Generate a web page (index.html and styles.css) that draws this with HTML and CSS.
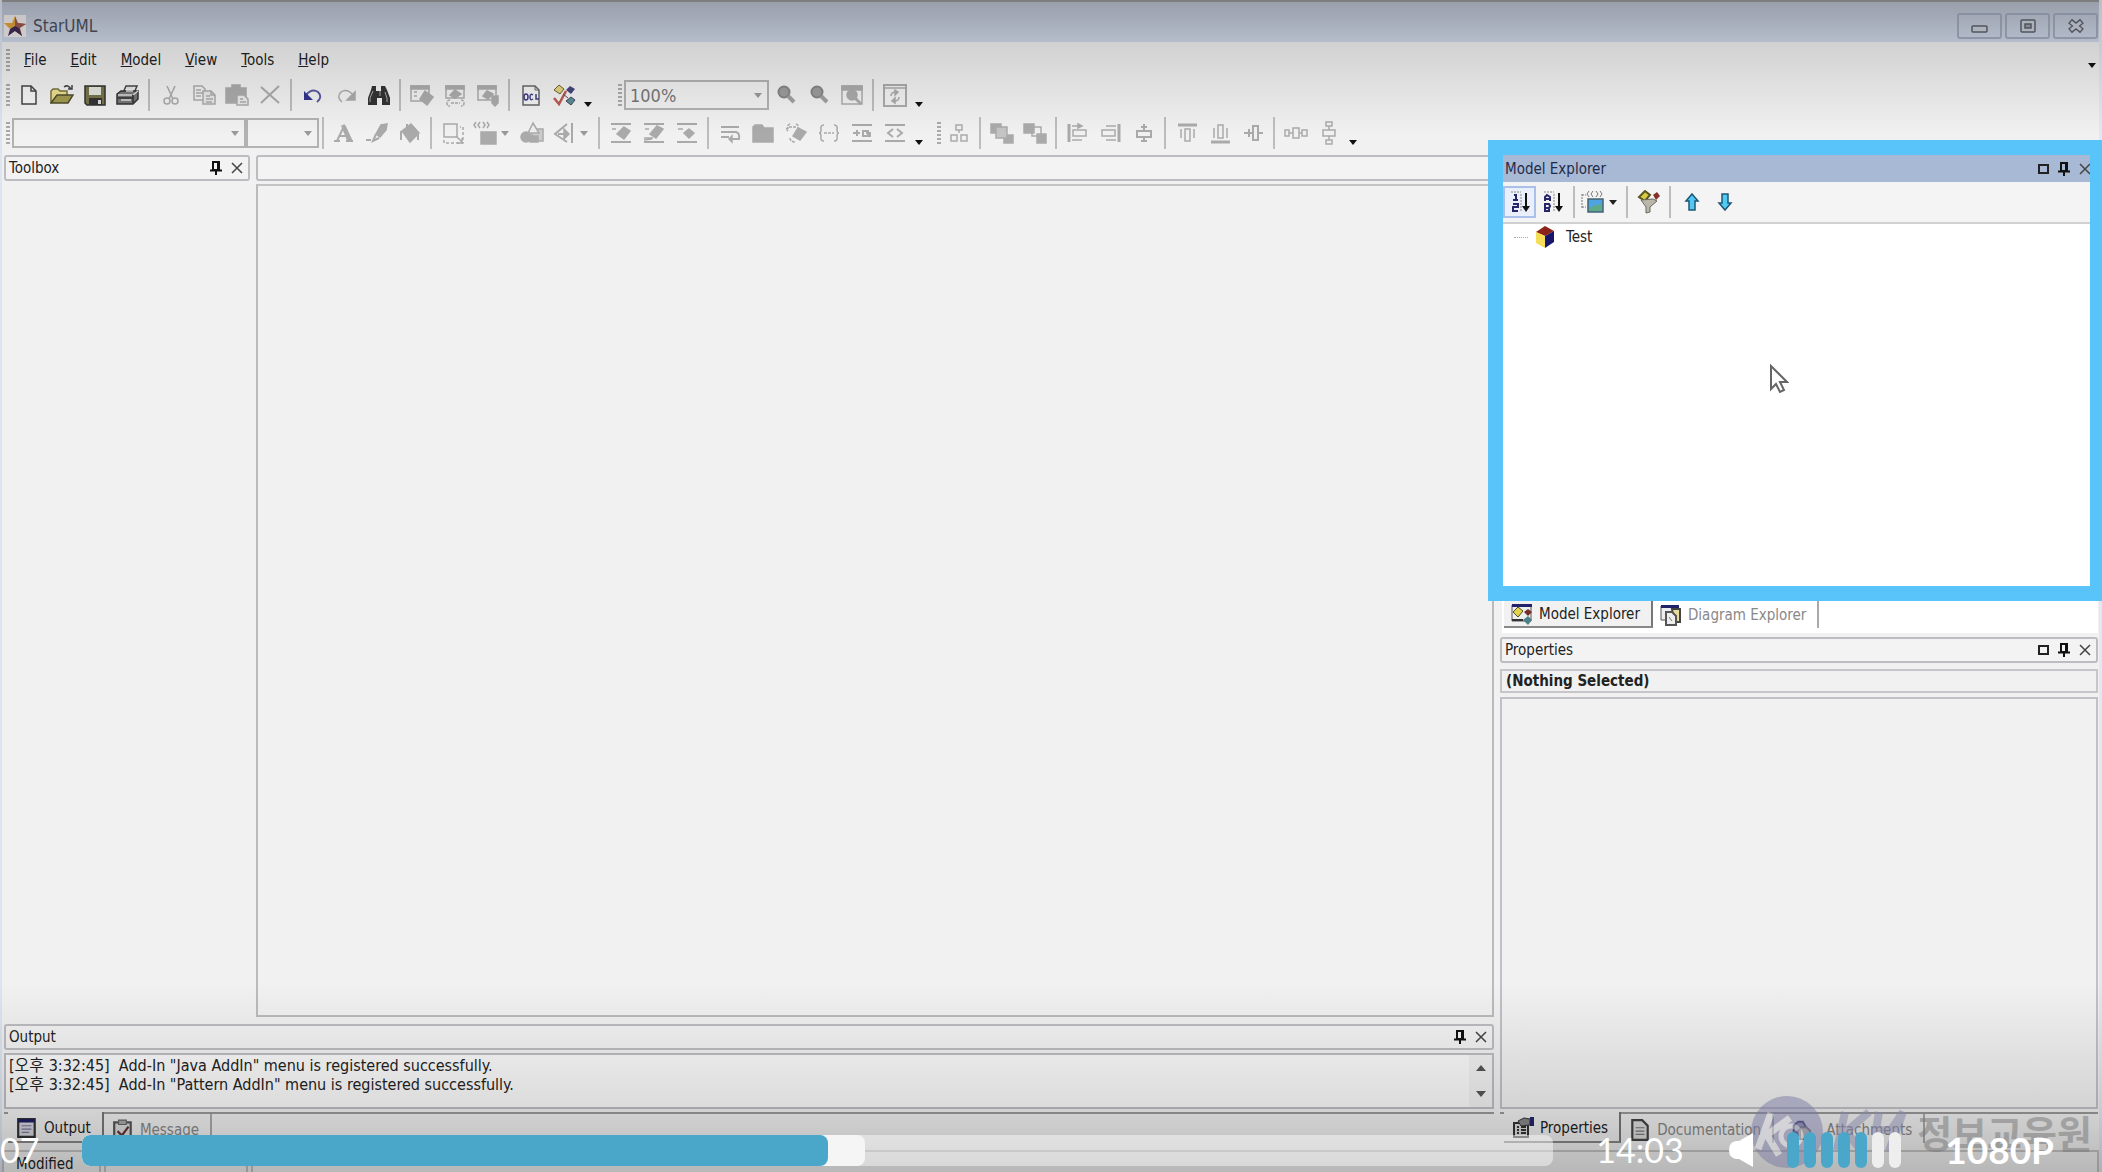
FILE: index.html
```
<!DOCTYPE html>
<html lang="en">
<head>
    <meta charset="UTF-8">
    <meta name="viewport" content="width=device-width, initial-scale=1.0">
    <title>StarUML</title>
    <link rel="stylesheet" href="styles.css">
</head>
<body>
    <!-- shared icons -->
    <svg class="sprite" aria-hidden="true">
        <symbol id="i-pin" viewBox="0 0 14 16"><path d="M4 2h6v8H4zM1 10.500h12M7 10v5" fill="none" stroke="#111" stroke-width="2"/><path d="M8 2h2v8H8z" fill="#111"/></symbol>
        <symbol id="i-close" viewBox="0 0 14 16"><path d="M2 3l10 10M12 3L2 13" fill="none" stroke="#444" stroke-width="1.500"/></symbol>
        <symbol id="i-max" viewBox="0 0 14 16"><path d="M3 4h9v8H3z" fill="none" stroke="#222" stroke-width="2"/></symbol>
        <symbol id="i-zoom" viewBox="0 0 24 24"><circle cx="10" cy="9" r="5.500" fill="#9c9c9c" stroke="#858585" stroke-width="2"/><path d="M14 13l6 6" stroke="#a0a0a0" stroke-width="4"/></symbol>
    </svg>

    <div class="app">
        <header class="titlebar">
            <svg class="logo" viewBox="0 0 22 24"><path d="M0 1h22v22H0z" fill="#f0eceb"/><path d="M11 2l3 7 8 1-6 4 2 8-7-5z" fill="#9c5b4a"/><path d="M11 2l-3 7-8 0 6 6 5-2z" fill="#e3a43c"/><path d="M6 15l-2 7 7-5 7 5-3-8-4-2z" fill="#432a55"/><path d="M11 2l2 7 9 1-8 4z" fill="#a25750"/></svg>
            <h1>StarUML</h1>
            <div class="window-buttons">
                <button aria-label="Minimize"><svg viewBox="0 0 20 16"><rect x="2" y="8" width="15" height="6" rx="1" fill="#ccd1da" stroke="#5e6370" stroke-width="1.500"/></svg></button>
                <button aria-label="Restore"><svg viewBox="0 0 20 16"><rect x="3" y="2" width="14" height="12" rx="1" fill="#ccd1da" stroke="#5e6370" stroke-width="1.500"/><rect x="7" y="6" width="6" height="4" fill="#9aa1af" stroke="#5e6370" stroke-width="1.500"/></svg></button>
                <button aria-label="Close"><svg viewBox="0 0 20 16"><path d="M4 3l12 10M16 3L4 13" stroke="#5e6370" stroke-width="6"/><path d="M5 4l10 8M15 4L5 12" stroke="#ccd1da" stroke-width="3"/></svg></button>
            </div>
        </header>

        <nav class="menubar">
            <span class="grip"></span>
            <button><u>F</u>ile</button>
            <button><u>E</u>dit</button>
            <button><u>M</u>odel</button>
            <button><u>V</u>iew</button>
            <button><u>T</u>ools</button>
            <button><u>H</u>elp</button>
            <span class="arrow menu-arrow"></span>
        </nav>

        <div class="toolbar">
            <span class="grip"></span>
            <button aria-label="New"><svg viewBox="0 0 24 24"><path d="M5 3h9l5 5v13H5z" fill="#f5f5f5" stroke="#444" stroke-width="1.500"/><path d="M14 3v5h5" fill="none" stroke="#444" stroke-width="1.500"/></svg></button>
            <button aria-label="Open"><svg viewBox="0 0 24 24"><path d="M1 20V8l2-2h5l2 2h7v4" fill="#eadf8d" stroke="#77713f" stroke-width="1.500"/><path d="M1 20l6-8h16l-5 8z" fill="#a39b50" stroke="#4f4c2b" stroke-width="1.500"/><path d="M14 4q4-3 7 2M22 2v4h-4" fill="none" stroke="#444" stroke-width="1.500"/></svg></button>
            <button aria-label="Save"><svg viewBox="0 0 24 24"><path d="M2 3h20v19H4l-2-2z" fill="#77744b" stroke="#333" stroke-width="1.500"/><path d="M6 4h12v8H6z" fill="#e4e4de"/><path d="M6 15h13v7H6z" fill="#333"/><path d="M15 17h3v4h-3z" fill="#ddd"/></svg></button>
            <button aria-label="Print"><svg viewBox="0 0 24 24"><path d="M7 10l3-7h11l-3 7" fill="#eee" stroke="#444" stroke-width="1.500"/><path d="M1 11l4-3h17v8l-5 5H1z" fill="#777" stroke="#333" stroke-width="1.500"/><path d="M2 12h14M5 17h10M17 12l5-4M11 5h6M10 8h7" stroke="#ddd" stroke-width="1.500"/><path d="M2 15h15M17 20v-8" stroke="#333" stroke-width="1.500"/></svg></button>
            <span class="sep"></span>
            <button aria-label="Cut"><svg class="dim" viewBox="0 0 24 24"><path d="M8 3l6 13M16 3l-6 13"/><circle cx="8" cy="18" r="3"/><circle cx="16" cy="18" r="3"/></svg></button>
            <button aria-label="Copy"><svg class="dim" viewBox="0 0 24 24"><path d="M2 3h8l3 3v11H2zM4 7h5M4 10h7M4 13h5"/><path d="M11 8h8l4 4v9H11z" fill="#e8e8e8"/><path d="M19 8v4h4M14 13h4M14 16h7M14 19h6"/></svg></button>
            <button aria-label="Paste"><svg class="dim" viewBox="0 0 24 24"><path d="M1 5h20v15H1z" class="solid"/><path d="M7 2h8v4H7z" class="solid"/><path d="M12 12h7l4 4v6H12z" fill="#e8e8e8"/><path d="M15 16h3M15 19h6"/></svg></button>
            <button aria-label="Delete"><svg class="dim" viewBox="0 0 24 24"><path d="M3 4l18 16M21 3L3 20" stroke-width="2"/></svg></button>
            <span class="sep"></span>
            <button aria-label="Undo"><svg viewBox="0 0 24 24"><path d="M5 12q6-7 12-3 5 5-1 10" fill="none" stroke="#59599b" stroke-width="2"/><path d="M3 8v9h9z" fill="#35358c"/></svg></button>
            <button aria-label="Redo"><svg class="dim" viewBox="0 0 24 24"><path d="M19 12q-6-7-12-3-5 5 1 10"/><path d="M21 9v8h-8z" class="solid"/></svg></button>
            <button aria-label="Find"><svg viewBox="0 0 24 24"><path d="M5 3h4v5h5V3h4l2 4 3 8v7h-8v-7h-5v7H1v-7l3-8z" fill="#333"/><path d="M6 8L3 15v4M13 8v5M18 9l2 6v4" fill="none" stroke="#aaa"/></svg></button>
            <span class="sep"></span>
            <button aria-label="Diagram"><svg class="dim" viewBox="0 0 24 24"><path d="M1 3h18v15H1z"/><path d="M1 3h18v3H1z" class="solid"/><path d="M15 8l8 6-6 8-7-6z" class="solid"/><path d="M4 9h3M4 13h3"/></svg></button>
            <button aria-label="Collection"><svg class="dim" viewBox="0 0 24 24"><path d="M3 3h18v12H3z"/><path d="M3 3h18v3H3z" class="solid"/><path d="M12 7l6 4-6 4-5-3z" class="solid"/><path d="M7 17q-3 0-3 3t3 3M18 17q3 0 3 3t-3 3M8 20h9" stroke-dasharray="3 1"/></svg></button>
            <button aria-label="Constraint"><svg class="dim" viewBox="0 0 24 24"><path d="M2 3h18v14H2z"/><path d="M2 3h18v3H2z" class="solid"/><path d="M11 8l6 3-5 5-5-3z" class="solid"/><path d="M16 13h6v7l-3 3-3-3z" class="solid"/></svg></button>
            <span class="sep"></span>
            <button aria-label="OCL"><svg viewBox="0 0 24 24"><path d="M4 3h12l4 4v15H4z" fill="#f2f2f2" stroke="#666" stroke-width="1.500"/><path d="M16 3v4h4" fill="none" stroke="#666"/><g fill="none" stroke="#3c3c85" stroke-width="1.500"><ellipse cx="7" cy="14" rx="2" ry="3"/><path d="M14 12q-3-2-3 2t3 2"/><path d="M17 11v5h3"/></g></svg></button>
            <button aria-label="Verify"><svg viewBox="0 0 24 24"><path d="M7 2l5 4-4 5-6-4z" fill="#e0d27e" stroke="#6c6434"/><path d="M18 3l5 3-4 5-5-4z" fill="#48447d"/><path d="M19 14l4 3-4 5-5-4z" fill="#5b8d91" stroke="#446"/><path d="M2 15l5 6 7-13" fill="none" stroke="#b95a51" stroke-width="2.500"/><path d="M11 11l5 4" stroke="#555"/></svg></button>
            <span class="arrow"></span>

            <span class="grip second"></span>
            <span class="combo zoom-combo"><select aria-label="Zoom level"><option>100%</option></select></span>
            <button aria-label="Zoom in"><svg viewBox="0 0 24 24"><use href="#i-zoom"/></svg></button>
            <button aria-label="Zoom out"><svg viewBox="0 0 24 24"><use href="#i-zoom"/></svg></button>
            <button aria-label="Fit to window"><svg class="dim" viewBox="0 0 24 24"><path d="M2 3h20v18H2z"/><path d="M2 3h20v4H2z" class="solid"/><circle cx="12" cy="12" r="5" class="solid"/><path d="M15 15l6 6" stroke-width="3"/></svg></button>
            <span class="sep"></span>
            <button aria-label="Refresh"><svg class="dim" viewBox="0 0 24 24"><path d="M1 2h22v21H1z" stroke-width="2"/><path d="M1 5h22M8 13q0-4 5-4M16 14q0 4-5 4"/><path d="M12 7l3 2-3 3zM12 15l-3 3 3 2z" class="solid"/></svg></button>
            <span class="arrow"></span>
        </div>

        <div class="toolbar format">
            <span class="grip"></span>
            <span class="combo font-combo"><select aria-label="Font" disabled></select></span>
            <span class="combo size-combo"><select aria-label="Font size" disabled></select></span>
            <span class="sep"></span>
            <button aria-label="Font color"><svg class="dim" viewBox="0 0 24 24"><path d="M5 20l7-15 6 15M7 15h9" stroke-width="2"/><path d="M10 5l6 15h4L13 5z" class="solid"/><path d="M2 20h6M14 20h7" stroke-width="2"/></svg></button>
            <button aria-label="Line color"><svg class="dim" viewBox="0 0 24 24"><path d="M22 3l-6 1-5 9 4 3 6-7z" class="solid"/><path d="M11 13l-3 7 6-3M1 19h5M17 5l-4 9" stroke-width="2"/></svg></button>
            <button aria-label="Fill color"><svg class="dim" viewBox="0 0 24 24"><path d="M4 10l9-7 8 9-9 9z" class="solid"/><path d="M9 3v8M3 10v9M20 12v7" stroke-width="2"/></svg></button>
            <span class="sep"></span>
            <button aria-label="Auto resize"><svg class="dim" viewBox="0 0 24 24"><path d="M3 3h13v13H3z"/><path d="M3 19v3h19V6h-3" stroke-dasharray="3 2"/><path d="M15 15l6 6M21 17v5h-5"/></svg></button>
            <button class="wide" aria-label="Stereotype"><svg class="dim" viewBox="0 0 24 24"><path d="M8 11h15v12H8z" class="solid"/><path d="M3 1L1 4l2 3M7 1L5 4l2 3M10 1l2 3-2 3M14 1l2 3-2 3" /></svg><i class="caret"></i></button>
            <button aria-label="Shapes"><svg class="dim" viewBox="0 0 24 24"><path d="M12 8h11v12H12z" fill="#ccc"/><path d="M13 2l6 10H8z" fill="#eee"/><circle cx="6" cy="16" r="5" class="solid"/><path d="M10 15h8v6h-8z" class="solid"/></svg></button>
            <button class="wide" aria-label="Line style"><svg class="dim" viewBox="0 0 24 24"><path d="M15 3L3 13l12 8M20 2v20M6 13h11" stroke-width="2"/><path d="M12 8l5 5-5 5z" class="solid"/></svg><i class="caret"></i></button>
            <span class="sep"></span>
            <button aria-label="Suppress attributes"><svg class="dim" viewBox="0 0 24 24"><path d="M2 3h20M2 21h20" stroke-width="2"/><path d="M15 6l6 4-6 8-7-5z" class="solid"/><path d="M3 8h4"/></svg></button>
            <button aria-label="Suppress operations"><svg class="dim" viewBox="0 0 24 24"><path d="M2 3h20M2 21h20" stroke-width="2"/><path d="M15 5l6 3-7 9-6-4z" class="solid"/><path d="M3 8h4M2 17h9M2 19l8-1"/></svg></button>
            <button aria-label="Suppress literals"><svg class="dim" viewBox="0 0 24 24"><path d="M2 3h20M2 21h20" stroke-width="2"/><path d="M14 8l5 4-5 5-5-5z" class="solid"/><path d="M3 8h5"/></svg></button>
            <span class="sep"></span>
            <button aria-label="Word wrap"><svg class="dim" viewBox="0 0 24 24"><path d="M3 6h18M3 11h15q4 1 3 7h-7M3 16h8" stroke-width="2"/><path d="M14 15l-3 3 3 3z" class="solid"/></svg></button>
            <button aria-label="Show parent name"><svg class="dim" viewBox="0 0 24 24"><path d="M2 6l2-2h7l2 3h9v14H2z" class="solid"/></svg></button>
            <button aria-label="Show signature"><svg class="dim" viewBox="0 0 24 24"><path d="M14 7l8 4-6 8-7-4z" class="solid"/><path d="M6 3Q3 4 4 7l-2 1 2 2M12 3q3 1 2 4M6 17q0 4 6 4M5 6h7" stroke-dasharray="3 1"/></svg></button>
            <button aria-label="Show property"><svg class="dim" viewBox="0 0 24 24"><path d="M7 4Q3 4 4 9q0 3-2 3 2 0 2 3-1 5 3 5M17 4q4 0 3 5 0 3 2 3-2 0-2 3 1 5-3 5"/><path d="M7 12h10" stroke-dasharray="3 1"/></svg></button>
            <button aria-label="Show visibility"><svg class="dim" viewBox="0 0 24 24"><path d="M2 4h20M2 20h20M3 12h7M7 9v6M13 10h5v5h-5zM16 12h4v4" stroke-width="2"/></svg></button>
            <button aria-label="Show stereotype"><svg class="dim" viewBox="0 0 24 24"><path d="M2 4h20M2 20h20" stroke-width="2"/><path d="M10 8l-5 4 5 4M14 8l5 4-5 4" stroke-width="2"/></svg></button>
            <span class="arrow"></span>
            <span class="grip third"></span>
            <button aria-label="Layout"><svg class="dim" viewBox="0 0 24 24"><path d="M9 4h6v5H9zM4 14h6v6H4zM14 14h6v6h-6zM12 9v3"/></svg></button>
            <span class="sep"></span>
            <button aria-label="Bring to front"><svg class="dim" viewBox="0 0 24 24"><path d="M1 3h10v9H1zM14 14h9v8h-9z" class="solid"/><path d="M6 6h11v11H6z" fill="#c4c4c4"/></svg></button>
            <button aria-label="Send to back"><svg class="dim" viewBox="0 0 24 24"><path d="M9 6h9v9H9z"/><path d="M1 3h10v9H1zM14 13h9v9h-9z" class="solid"/></svg></button>
            <span class="sep"></span>
            <button aria-label="Align left"><svg class="dim" viewBox="0 0 24 24"><path d="M3 3v18" stroke-width="3"/><path d="M7 9h13v6H7zM6 5h10M6 19h10"/><path d="M12 3l4 2-4 2z" class="solid"/></svg></button>
            <button aria-label="Align right"><svg class="dim" viewBox="0 0 24 24"><path d="M20 3v18" stroke-width="3"/><path d="M3 9h13v6H3zM7 5h10M7 19h10"/></svg></button>
            <button aria-label="Align middle"><svg class="dim" viewBox="0 0 24 24"><path d="M5 10h14v6H5zM12 3v7M12 16v5M9 6h6M9 20h6" stroke-width="2"/></svg></button>
            <span class="sep"></span>
            <button aria-label="Align top"><svg class="dim" viewBox="0 0 24 24"><path d="M3 4h19" stroke-width="3"/><path d="M10 8h5v12h-5zM6 8v9M19 8v9"/></svg></button>
            <button aria-label="Align bottom"><svg class="dim" viewBox="0 0 24 24"><path d="M3 21h19" stroke-width="3"/><path d="M10 4h5v13h-5zM6 7v10M19 7v10"/></svg></button>
            <button aria-label="Align center"><svg class="dim" viewBox="0 0 24 24"><path d="M12 5h5v14h-5zM3 12h8M17 12h5M8 8v8" stroke-width="2"/></svg></button>
            <span class="sep"></span>
            <button aria-label="Space horizontally"><svg class="dim" viewBox="0 0 24 24"><path d="M1 9h4v6H1zM9 7h6v10H9zM18 9h5v6h-5zM5 12h4M15 12h3"/></svg></button>
            <button aria-label="Space vertically"><svg class="dim" viewBox="0 0 24 24"><path d="M9 1h6v4H9zM6 9h12v6H6zM9 19h6v4H9zM12 5v4M12 15v4"/></svg></button>
            <span class="arrow"></span>
        </div>

        <main class="workspace">
            <div class="left-side">
                <div class="editor">
                    <section class="toolbox">
                        <header class="panel-head">
                            <h2>Toolbox</h2>
                            <button aria-label="Pin"><svg viewBox="0 0 14 16"><use href="#i-pin"/></svg></button>
                            <button aria-label="Close"><svg viewBox="0 0 14 16"><use href="#i-close"/></svg></button>
                        </header>
                    </section>
                    <section class="canvas">
                        <div class="panel-head"></div>
                        <div class="canvas-area"></div>
                    </section>
                </div>
                <section class="output">
                    <header class="panel-head">
                        <h2>Output</h2>
                        <button aria-label="Pin"><svg viewBox="0 0 14 16"><use href="#i-pin"/></svg></button>
                        <button aria-label="Close"><svg viewBox="0 0 14 16"><use href="#i-close"/></svg></button>
                    </header>
                    <div class="log">
                        <div class="log-lines">
                            <p>[오후 3:32:45]&nbsp; Add-In "Java AddIn" menu is registered successfully.</p>
                            <p>[오후 3:32:45]&nbsp; Add-In "Pattern AddIn" menu is registered successfully.</p>
                        </div>
                        <div class="scroll">
                            <span class="scroll-up"></span>
                            <span class="scroll-down"></span>
                        </div>
                    </div>
                    <nav class="tabs">
                        <button class="tab active"><svg viewBox="0 0 20 20"><path d="M2 2h15v16H2z" fill="#d5d5dc" stroke="#333" stroke-width="2"/><path d="M2 2h15v3H2z" fill="#1e1e62"/><path d="M5 8h9M5 11h9M5 14h7" stroke="#77779c"/></svg>Output</button>
                        <button class="tab"><svg viewBox="0 0 20 20"><path d="M2 3h15v16H2z" fill="#ddd" stroke="#555" stroke-width="2"/><path d="M6 1h7v4H6z" fill="#aaa" stroke="#666"/><path d="M5 11l4 4 6-8" fill="none" stroke="#633" stroke-width="2"/></svg>Message</button>
                    </nav>
                </section>
            </div>

            <div class="right-side">
                <section class="explorer">
                    <header class="panel-head focused">
                        <h2>Model Explorer</h2>
                        <button aria-label="Maximize"><svg viewBox="0 0 14 16"><use href="#i-max"/></svg></button>
                        <button aria-label="Pin"><svg viewBox="0 0 14 16"><use href="#i-pin"/></svg></button>
                        <button aria-label="Close"><svg viewBox="0 0 14 16"><use href="#i-close"/></svg></button>
                    </header>
                    <div class="toolbar explorer-tools">
                        <button class="pressed" aria-label="Sort by order"><svg viewBox="0 0 24 24"><path d="M3 2h10M13 4v18" stroke="#888" stroke-dasharray="2 1"/><path d="M6 5h2v5M5 10h5M5 14h5v3H5v4h5" fill="none" stroke="#262668" stroke-width="2"/><path d="M18 3v15" stroke="#111" stroke-width="2"/><path d="M14 16h8l-4 6z" fill="#111"/></svg></button>
                        <button aria-label="Sort by name"><svg viewBox="0 0 24 24"><path d="M3 2h10M13 4v18" stroke="#888" stroke-dasharray="2 1"/><path d="M4 11V7l2-2 3 2v4M4 9h5M4 14h4l1 2-1 2H4zM4 18h4v3H4z" fill="none" stroke="#262668" stroke-width="2"/><path d="M18 3v15" stroke="#111" stroke-width="2"/><path d="M14 16h8l-4 6z" fill="#111"/></svg></button>
                        <span class="sep"></span>
                        <button class="wide" aria-label="Stereotype display"><svg viewBox="0 0 24 24"><path d="M8 1L6 4l2 3M12 1l-2 3 2 3M15 1l2 3-2 3M19 1l2 3-2 3" fill="none" stroke="#777"/><path d="M1 4v14M1 5h4M1 17h4" fill="none" stroke="#777" stroke-dasharray="2 1"/><path d="M7 9h15v13H7z" fill="#4ea4e0" stroke="#47616c" stroke-width="1.500"/><path d="M8 18q6-3 13-4v7H8z" fill="#5ea986"/></svg><i class="caret dark"></i></button>
                        <span class="sep"></span>
                        <button aria-label="Filter"><svg viewBox="0 0 24 24"><path d="M8 1l5 4-5 6-6-4z" fill="#d8cb43" stroke="#5b561f" stroke-width="2"/><path d="M16 5l4-3 3 4-4 4z" fill="#863127"/><path d="M4 10l12-1 4 2-7 6v5l-4 1v-6z" fill="#bbb6aa" stroke="#6b6861"/></svg></button>
                        <span class="sep"></span>
                        <button aria-label="Move up"><svg viewBox="0 0 24 24"><path d="M12 4l6 7h-3v9H9v-9H6z" fill="#52c9f3" stroke="#1e5775" stroke-width="1.500"/></svg></button>
                        <button aria-label="Move down"><svg viewBox="0 0 24 24"><path d="M12 20l6-7h-3V4H9v9H6z" fill="#52c9f3" stroke="#1e5775" stroke-width="1.500"/></svg></button>
                    </div>
                    <div class="tree">
                        <span class="branch"></span>
                        <svg viewBox="0 0 20 22"><path d="M10 0l9 5-9 5-9-4z" fill="#8b2318"/><path d="M1 6l9 4v12l-9-5z" fill="#f5dd58"/><path d="M10 10l9-5v11l-9 6z" fill="#16166d"/></svg>
                        <span>Test</span>
                        <svg class="cursor" viewBox="0 0 20 30"><path d="M2 2v23l5-5 4 8 4-2-4-8h7z" fill="#fff" stroke="#666" stroke-width="2"/></svg>
                    </div>
                    <div class="highlight"></div>
                </section>

                <nav class="tabs explorer-tabs">
                    <button class="tab active"><svg viewBox="0 0 22 22"><path d="M1 2h19v16H1z" fill="#eee" stroke="#555"/><path d="M1 1h20v3H1z" fill="#222269"/><path d="M7 4l5 4-5 6-5-5z" fill="#e4d34d" stroke="#514d24"/><path d="M17 6l4 3-4 4-4-4z" fill="#742e2b"/><path d="M17 13l4 4-4 5-5-5z" fill="#4d8187"/><path d="M1 17h11" stroke="#333" stroke-width="2"/></svg>Model Explorer</button>
                    <button class="tab"><svg viewBox="0 0 22 22"><path d="M1 2h17v14H1z" fill="#eee" stroke="#555"/><path d="M1 1h18v3H1z" fill="#222269"/><path d="M12 5h8v13h-6z" fill="#e6dc9b" stroke="#444" stroke-width="2"/><path d="M6 8h6l4 4v9H6z" fill="#eee" stroke="#555" stroke-width="2"/><path d="M9 13l3 4" stroke="#777"/></svg>Diagram Explorer</button>
                </nav>

                <section class="properties">
                    <header class="panel-head">
                        <h2>Properties</h2>
                        <button aria-label="Maximize"><svg viewBox="0 0 14 16"><use href="#i-max"/></svg></button>
                        <button aria-label="Pin"><svg viewBox="0 0 14 16"><use href="#i-pin"/></svg></button>
                        <button aria-label="Close"><svg viewBox="0 0 14 16"><use href="#i-close"/></svg></button>
                    </header>
                    <p class="selection">(Nothing Selected)</p>
                    <div class="property-grid"></div>
                    <nav class="tabs">
                        <button class="tab active"><svg viewBox="0 0 22 22"><path d="M2 6h14v14H2z" fill="#ddd" stroke="#333" stroke-width="2"/><path d="M5 10h2M9 10h5M5 13h2M9 13h5M5 16h2M9 16h5" stroke="#333" stroke-width="2"/><path d="M6 4l6-3 6 1v6l-9 1z" fill="#888" stroke="#333"/><path d="M18 0h4v9h-4z" fill="#26266c"/></svg>Properties</button>
                        <button class="tab"><svg viewBox="0 0 20 20"><path d="M3 1h9l5 5v13H3z" fill="#ddd" stroke="#444" stroke-width="2"/><path d="M6 8h8M6 11h8M6 14h8" stroke="#777"/></svg>Documentation</button>
                        <button class="tab attach"><svg viewBox="0 0 24 22"><path d="M4 17V6l5-4h5l3 5-6 3z" fill="#9a9cb8" stroke="#30336b" stroke-width="2"/><path d="M3 13h7v5H3z" fill="#30336b"/><path d="M11 8h7l4 4v9H11z" fill="#d6d4ba" stroke="#777" stroke-width="2"/></svg>Attachments</button>
                    </nav>
                </section>
            </div>
        </main>

        <footer class="statusbar">
            <span class="cell state">Modified</span>
            <span class="cell info"></span>
            <span class="cell rest"></span>
        </footer>
    </div>

    <!-- video player overlay -->
    <div class="shade"></div>
    <div class="watermark">
        <svg viewBox="0 0 164 80"><circle cx="38" cy="40" r="36" fill="#7b7ba6"/><path d="M22 21L9 57M41 26L18 43l12 20" fill="none" stroke="#dcdce4" stroke-width="7"/><circle cx="42" cy="44" r="10" fill="none" stroke="#dcdce4" stroke-width="5"/><path d="M96 20L88 58M120 20L97 40l15 18M130 20l-3 18h15l12-18-14 39" fill="none" stroke="#8585ab" stroke-width="8"/></svg>
        <span>정보교육원</span>
    </div>
    <div class="player">
        <span class="elapsed">07</span>
        <div class="track">
            <div class="buffered" style="width: 53.2%"></div>
            <div class="played" style="width: 50.7%"></div>
        </div>
        <span class="duration">14:03</span>
        <button class="mute" aria-label="Mute"><svg viewBox="0 0 26 36"><path d="M25 1v34L11 27H8Q1 26 1 18t7-9h3z" fill="#fff"/></svg></button>
        <div class="volume">
            <i class="on"></i><i class="on"></i><i class="on"></i><i class="on"></i><i class="on"></i><i></i><i></i>
        </div>
        <button class="quality">1080P</button>
    </div>
</body>
</html>
```
FILE: styles.css
```
* {
    box-sizing: border-box;
}
body {
    margin: 0;
    position: relative;
    height: 100vh;
    overflow: hidden;
    font-family: "DejaVu Sans Condensed", "Noto Sans CJK KR", sans-serif;
    font-size: 15px;
    color: #222;
    background: #f1f1f1;
}
button {
    font: inherit;
    color: inherit;
    background: none;
    border: 0;
    padding: 0;
}
h1, h2, p {
    margin: 0;
    font-weight: normal;
}
h2 {
    font-size: 15px;
}
.sprite {
    position: absolute;
    width: 0;
    height: 0;
}
.app {
    display: flex;
    flex-direction: column;
    height: 100%;
    border-left: 2px solid #dce4f2;
    border-right: 3px solid #e2e8f3;
}

/* title + menu */
.titlebar {
    display: flex;
    align-items: center;
    height: 42px;
    padding: 8px 0 0 2px;
    flex-shrink: 0;
    border-top: 2px solid #999;
    background: linear-gradient(#bac2d0, #d0d9ea);
}
.titlebar h1 {
    flex: 1;
    font-size: 17px;
    color: #4b515e;
}
.logo {
    width: 22px;
    height: 24px;
    margin-right: 7px;
}
.window-buttons {
    display: flex;
    gap: 3px;
    padding-right: 1px;
}
.window-buttons button {
    width: 45px;
    height: 26px;
    border: 2px solid #a3adc0;
    border-radius: 3px;
    display: grid;
    place-items: center;
}
.window-buttons svg {
    width: 20px;
    height: 16px;
}
.menubar {
    display: flex;
    align-items: center;
    height: 36px;
    padding-left: 4px;
    flex-shrink: 0;
}
.menubar button {
    margin-left: 12px;
    margin-right: 12px;
}
.menu-arrow {
    margin-left: auto;
}

/* toolbars */
.toolbar {
    display: flex;
    align-items: center;
    height: 34px;
    padding-left: 4px;
    flex-shrink: 0;
}
.format {
    margin: 4px 0 5px;
}
.toolbar button {
    width: 33px;
    height: 32px;
    display: flex;
    align-items: center;
    justify-content: center;
    flex-shrink: 0;
}
.toolbar button.wide {
    width: 46px;
    padding-left: 4px;
    justify-content: flex-start;
}
.toolbar svg {
    width: 24px;
    height: 24px;
}
.dim {
    fill: none;
    stroke: #aaa;
    stroke-width: 1.5;
}
.dim .solid {
    fill: #aaa;
}
.grip {
    width: 4px;
    height: 22px;
    margin-right: 2px;
    flex-shrink: 0;
    background: repeating-linear-gradient(#aaa 0 2px, transparent 2px 4px);
}
.grip.second {
    margin-left: 23px;
}
.grip.third {
    margin: 0 1px 0 11px;
}
.sep {
    width: 2px;
    height: 32px;
    margin: 0 4px;
    flex-shrink: 0;
    background: #bdbdbd;
}
.combo + .sep {
    margin: 0 3px;
}
.arrow {
    width: 15px;
    height: 24px;
    display: flex;
    align-items: flex-end;
    justify-content: center;
    flex-shrink: 0;
}
.arrow::before {
    content: "";
    border: 4px solid transparent;
    border-top: 5px solid #111;
    border-bottom: 0;
}
.menu-arrow {
    align-items: center;
    margin-top: 10px;
}
.caret {
    margin-left: 4px;
    border: 4px solid transparent;
    border-top: 5px solid #999;
    border-bottom: 0;
}
.caret.dark {
    border-top-color: #222;
}
.combo {
    position: relative;
    height: 30px;
    flex-shrink: 0;
}
.combo select {
    appearance: none;
    width: 100%;
    height: 100%;
    padding: 0 4px;
    border: 2px solid #b2b2b2;
    border-radius: 0;
    background: transparent;
    font: inherit;
    font-size: 18px;
    color: #777;
    opacity: 1;
}
.combo::after {
    content: "";
    position: absolute;
    right: 7px;
    top: 13px;
    border: 4px solid transparent;
    border-top: 5px solid #999;
    border-bottom: 0;
}
.zoom-combo { width: 145px; }
.font-combo { width: 234px; }
.size-combo { width: 73px; }

/* docked panels */
.workspace {
    display: flex;
    flex: 1;
    gap: 7px;
    min-height: 0;
    padding: 0 1px 0 2px;
}
.left-side {
    flex: 1;
    display: flex;
    flex-direction: column;
    min-width: 0;
}
.editor {
    flex: 1;
    display: flex;
    gap: 6px;
}
.toolbox {
    width: 246px;
}
.panel-head {
    display: flex;
    align-items: center;
    gap: 7px;
    height: 26px;
    padding: 0 4px 0 3px;
    flex-shrink: 0;
    border: 2px solid #bdbdc1;
    border-radius: 3px;
    background: #f3f3f3;
}
.panel-head h2 {
    flex: 1;
}
.panel-head button, .panel-head svg {
    width: 14px;
    height: 16px;
    display: block;
}
.panel-head.focused {
    height: 27px;
    border-color: #a8b9d6;
    background: #a8b9d6;
    color: #1e2c49;
}
.canvas {
    flex: 1;
    display: flex;
    flex-direction: column;
}
.canvas-area {
    flex: 1;
    margin-top: 3px;
    border: 2px solid #bbb;
    border-top-color: #c4c4c4;
}
.output {
    margin-top: 7px;
}
.log {
    display: flex;
    height: 56px;
    margin-top: 3px;
    border: 2px solid #bcbcc2;
}
.log-lines {
    flex: 1;
    padding: 1px 3px;
    background: #fafafa;
    font-size: 16px;
    line-height: 19px;
}
.scroll {
    width: 23px;
    display: flex;
    flex-direction: column;
    justify-content: space-between;
    align-items: center;
    padding: 10px 0;
}
.scroll span {
    border: 5px solid transparent;
}
.scroll .scroll-up {
    border-top: 0;
    border-bottom: 6px solid #555;
}
.scroll .scroll-down {
    border-bottom: 0;
    border-top: 6px solid #555;
}

/* tabs */
.tabs {
    display: flex;
    height: 38px;
    margin-top: 3px;
    padding-bottom: 7px;
    border-top: 2px solid #999;
}
.tab {
    display: flex;
    align-items: center;
    gap: 6px;
    padding: 2px 11px 0 8px;
    border-right: 2px solid #aaa;
    color: #888;
    white-space: nowrap;
}
.tab svg {
    width: 22px;
    height: 22px;
    flex-shrink: 0;
}
.tab.active {
    margin-top: -2px;
    margin-left: 4px;
    color: #222;
    background: #f1f1f1;
    border-right-color: #777;
    border-bottom: 2px solid #888;
}
.right-side {
    width: 598px;
    margin-left: -1px;
    display: flex;
    flex-direction: column;
    flex-shrink: 0;
}
.explorer {
    position: relative;
    height: 446px;
    display: flex;
    flex-direction: column;
}
.explorer-tools {
    height: 42px;
    padding-left: 3px;
    border-bottom: 2px solid #d0d0d0;
    background: #f4f4f4;
}
.explorer-tools .pressed {
    border: 2px solid #aac0ea;
    background: #eaf0fb;
}
.explorer-tools button.wide {
    width: 43px;
    padding-left: 2px;
}
.tree {
    position: relative;
    flex: 1;
    display: flex;
    align-items: flex-start;
    padding: 2px 14px;
    line-height: 23px;
    background: #fff;
}
.branch {
    width: 14px;
    margin: 11px 7px 0 0;
    border-top: 1px dotted #aaa;
}
.tree svg {
    width: 20px;
    height: 22px;
    margin-right: 11px;
}
.tree .cursor {
    position: absolute;
    left: 45%;
    top: 140px;
    height: 30px;
}
.highlight {
    position: absolute;
    inset: -15px -5px 0 -12px;
    border: solid #58c4f9;
    border-width: 15px 13px 15px 15px;
}
.explorer-tabs {
    height: 32px;
    margin: 0 0 4px 2px;
    padding-bottom: 5px;
    border: 0;
    background: #fff;
}
.explorer-tabs .tab {
    padding-top: 0;
    padding-left: 7px;
}
.explorer-tabs .active {
    margin: 0 0 0 2px;
}
.properties {
    flex: 1;
    display: flex;
    flex-direction: column;
}
.selection {
    height: 24px;
    margin: 6px 0 4px;
    padding: 0 4px;
    line-height: 20px;
    font-weight: bold;
    border: 2px solid #c6c6ca;
}
.property-grid {
    flex: 1;
    border: 2px solid #c0c0c6;
}
.attach {
    padding-left: 16px;
    gap: 14px;
}
.statusbar {
    display: flex;
    gap: 3px;
    height: 22px;
    flex-shrink: 0;
}
.cell {
    border: 2px solid #c4c4c4;
    border-bottom: 0;
    line-height: 25px;
    padding-left: 12px;
    overflow: hidden;
}
.state { width: 99px; }
.info { width: 144px; }
.rest { flex: 1; }

/* player overlay */
.shade {
    position: absolute;
    inset: 0;
    pointer-events: none;
    background:
        linear-gradient(rgba(0, 0, 0, .18), rgba(0, 0, 0, .12) 50px, transparent 135px),
        linear-gradient(transparent calc(100% - 190px), rgba(0, 0, 0, .12) calc(100% - 65px), rgba(0, 0, 0, .24));
}
.watermark {
    position: absolute;
    right: 10px;
    bottom: 0;
    display: flex;
    align-items: center;
    gap: 4px;
    opacity: .5;
    font-family: "Noto Sans CJK KR", sans-serif;
    font-size: 38px;
    font-weight: bold;
    line-height: 80px;
    color: #777;
}
.watermark svg {
    width: 164px;
    height: 80px;
}
.player {
    position: absolute;
    left: 0;
    right: 0;
    bottom: 4px;
    display: flex;
    align-items: center;
    height: 36px;
    font-family: Lato, sans-serif;
    font-size: 34px;
    line-height: 36px;
    color: #fff;
}
.elapsed {
    width: 82px;
}
.track {
    position: relative;
    flex: 1;
    height: 31px;
    border-radius: 8px;
    overflow: hidden;
    background: rgba(255, 255, 255, .45);
}
.buffered, .played {
    position: absolute;
    left: 0;
    top: 0;
    height: 100%;
    border-radius: 8px;
    background: #f5f5f5;
}
.played {
    background: #4ba7ca;
}
.duration {
    width: 132px;
    margin-left: 43px;
}
.mute, .mute svg {
    display: block;
    width: 26px;
    height: 36px;
}
.volume {
    display: flex;
    gap: 5px;
    margin-left: 33px;
}
.volume i {
    width: 12px;
    height: 36px;
    border-radius: 6px;
    background: #eee;
}
.volume .on {
    background: #4ba7ca;
}
.quality {
    margin-left: 44px;
    margin-right: 48px;
    font-size: 37px;
    font-weight: bold;
}
```
